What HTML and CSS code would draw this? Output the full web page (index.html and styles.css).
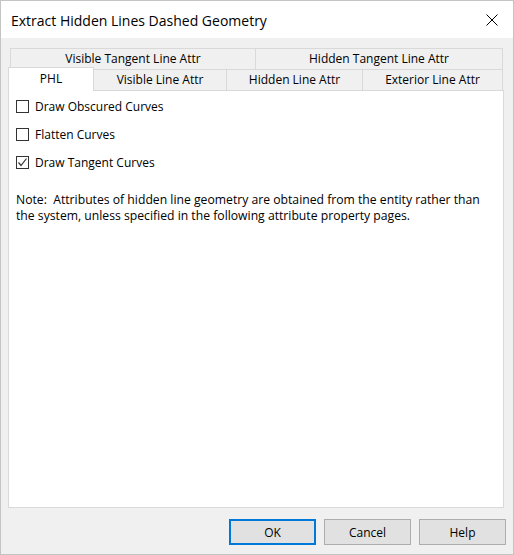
FILE: index.html
```html
<!DOCTYPE html>
<html lang="en">
<head>
    <meta charset="UTF-8">
    <title>Extract Hidden Lines Dashed Geometry</title>
    <link rel="stylesheet" href="styles.css">
</head>
<body>
    <div class="dialog">
        <div class="title-bar">
            <span class="title">Extract Hidden Lines Dashed Geometry</span>
            <svg class="close" width="12" height="12" viewBox="0 0 12 12">
                <path d="M0.5 0.5 L11.5 11.5 M11.5 0.5 L0.5 11.5" stroke="#000" stroke-width="1" fill="none"/>
            </svg>
        </div>
        <div class="content">
            <div class="tab-row top-row">
                <div class="tab w-vt">Visible Tangent Line Attr</div>
                <div class="tab w-ht">Hidden Tangent Line Attr</div>
            </div>
            <div class="tab-row bottom-row">
                <div class="tab active w-phl">PHL</div>
                <div class="tab w-vl">Visible Line Attr</div>
                <div class="tab w-hl">Hidden Line Attr</div>
                <div class="tab w-el">Exterior Line Attr</div>
            </div>
            <div class="panel">
                <label class="check-row"><span class="box"></span>Draw Obscured Curves</label>
                <label class="check-row"><span class="box"></span>Flatten Curves</label>
                <label class="check-row">
                    <span class="box">
                        <svg width="11" height="11" viewBox="0 0 11 11">
                            <path d="M1.5 5.5 L4 8.5 L9.5 1.5" stroke="#333" stroke-width="1.2" fill="none"/>
                        </svg>
                    </span>Draw Tangent Curves
                </label>
                <p class="note">Note:&nbsp; Attributes of hidden line geometry are obtained from the entity rather than<br>the system, unless specified in the following attribute property pages.</p>
            </div>
            <div class="buttons">
                <button class="btn default">OK</button>
                <button class="btn">Cancel</button>
                <button class="btn">Help</button>
            </div>
        </div>
    </div>
</body>
</html>
```

FILE: styles.css
```css
body {
    margin: 0;
    font-family: "Open Sans", "Noto Sans", sans-serif;
    font-size: 12px;
    color: #000;
    background: #f0f0f0;
}
.dialog {
    width: 514px;
    height: 555px;
    box-sizing: border-box;
    border: 1px solid #c4c4c4;
    background: #f0f0f0;
    display: flex;
    flex-direction: column;
}
.title-bar {
    height: 37px;
    background: #fff;
    display: flex;
    align-items: center;
    justify-content: space-between;
    padding: 0 15px 0 10px;
}
.title {
    font-size: 14px;
    padding-top: 1px;
}
.close {
    margin-top: 1px;
}
.content {
    padding: 10px 9px 0 7px;
    display: flex;
    flex-direction: column;
}
.tab-row {
    display: flex;
    height: 21px;
    padding-left: 2px;
}
.tab {
    box-sizing: border-box;
    height: 21px;
    border: 1px solid #d9d9d9;
    border-bottom: none;
    background: #f0f0f0;
    text-align: center;
    line-height: 20px;
    margin-left: -1px;
}
.tab:first-child {
    margin-left: 0;
}
.w-vt { width: 246px; }
.w-ht { width: 248px; }
.w-phl { width: 86px; }
.w-vl { width: 134px; }
.w-hl { width: 137px; }
.w-el { width: 141px; }
.tab.active {
    background: #fff;
    height: 24px;
    margin: -2px 0 0 -2px;
    position: relative;
    z-index: 1;
    line-height: 22px;
    padding-bottom: 2px;
}
.panel {
    box-sizing: border-box;
    height: 418px;
    width: 496px;
    background: #fff;
    border: 1px solid #d9d9d9;
    padding: 1px 7px 0;
}
.check-row {
    display: flex;
    align-items: center;
    height: 28px;
}
.box {
    box-sizing: border-box;
    width: 13px;
    height: 13px;
    border: 1px solid #333;
    background: #fff;
    margin-right: 6px;
    display: flex;
    align-items: center;
    justify-content: center;
}
.note {
    margin: 16px 0 0;
    line-height: 16px;
    font-size: 12.2px;
}
.buttons {
    display: flex;
    justify-content: flex-end;
    gap: 8px;
    margin-top: 11px;
    margin-right: -2px;
}
.btn {
    box-sizing: border-box;
    width: 87px;
    height: 26px;
    background: #e1e1e1;
    border: 1px solid #adadad;
    font-family: inherit;
    font-size: 12px;
    color: #000;
    padding: 0;
}
.btn.default {
    border: 2px solid #0078d7;
}
```
